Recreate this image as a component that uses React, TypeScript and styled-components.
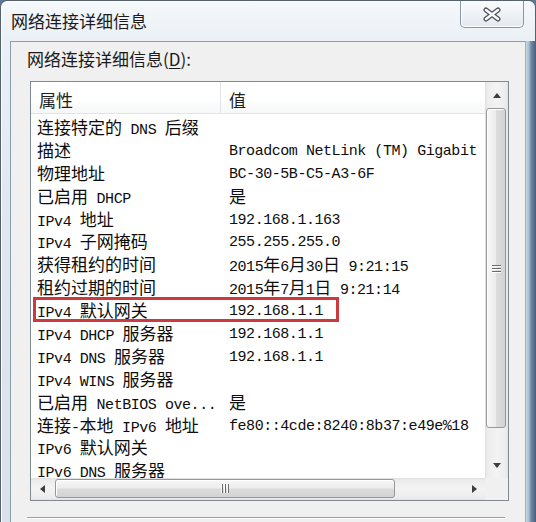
import React from "react";
import styled, { createGlobalStyle } from "styled-components";

const GlobalStyle = createGlobalStyle`
  html, body {
    margin: 0;
    padding: 0;
  }
  body {
    background: #5e7897;
    font-family: "Noto Sans CJK SC", "Noto Sans", sans-serif;
    color: #141414;
  }
`;

const Screen = styled.div`
  width: 536px;
  height: 522px;
  overflow: hidden;
  background: #5e7897;
`;

const Window = styled.div`
  box-sizing: border-box;
  width: 536px;
  height: 560px;
  display: flex;
  flex-direction: column;
  border: 1px solid #56616e;
  border-bottom: 0;
  border-radius: 7px 7px 0 0;
  background: linear-gradient(
    180deg,
    #f5f8fb 0px,
    #eaf0f5 40px,
    #dfe7ef 220px,
    #d8e1ea 560px
  );
  box-shadow: inset 1px 1px 0 #fdfeff;
`;

const TitleBar = styled.div`
  height: 40px;
  flex: none;
  display: flex;
  justify-content: space-between;
  align-items: flex-start;
  padding: 0 11px 0 10px;
`;

const Title = styled.div`
  margin-top: 11px;
  font-size: 17px;
  line-height: 17px;
  color: #1b1b1b;
`;

const CloseButton = styled.div`
  box-sizing: border-box;
  width: 64px;
  height: 27px;
  display: flex;
  align-items: center;
  justify-content: center;
  border: 1px solid #8795a4;
  border-top: 0;
  border-radius: 0 0 5px 5px;
  background: linear-gradient(180deg, #fafcfd 0%, #eef2f6 50%, #e2e9f0 100%);
  box-shadow: inset 0 -1px 0 #ffffff, inset 1px 0 0 #ffffff;
`;

const Body = styled.div`
  flex: 1;
  display: flex;
  padding-left: 9px;
`;

const Client = styled.div`
  flex: 1;
  display: flex;
  flex-direction: column;
  padding: 5px 16px 0 16px;
  background: #f0f0f0;
  border-top: 1px solid #8d9bab;
  border-left: 1px solid #8d9bab;
  border-right: 1px solid #a3b0be;
`;

const RightFrame = styled.div`
  width: 9px;
  flex: none;
  background: linear-gradient(
    90deg,
    #cbd7e3 0px,
    #a9bbcf 3px,
    #6f89a7 5px,
    #56708f 8px,
    #4d6584 9px
  );
`;

const Label = styled.div`
  height: 24px;
  font-size: 17px;
  line-height: 24px;
  margin-bottom: 10px;
  color: #1a1a1a;

  u {
    text-decoration: underline;
    text-underline-offset: 2px;
  }
`;

const ListBox = styled.div`
  box-sizing: border-box;
  margin-left: 3px;
  height: 420px;
  display: grid;
  grid-template-columns: 1fr 23px;
  grid-template-rows: 396px 22px;
  border: 1px solid #828790;
  background: #ffffff;
`;

const ListContent = styled.div`
  grid-column: 1;
  grid-row: 1;
  overflow: hidden;
  display: flex;
  flex-direction: column;
`;

const Header = styled.div`
  box-sizing: border-box;
  height: 32px;
  flex: none;
  display: grid;
  grid-template-columns: 190px 1fr;
  border-bottom: 1px solid #e3e4e6;
  background: linear-gradient(180deg, #ffffff 0%, #ffffff 55%, #f6f7f9 100%);
`;

type HeaderCellProps = {
  $divider?: boolean;
};

const HeaderCell = styled.div<HeaderCellProps>`
  display: flex;
  align-items: center;
  padding: 3px 0 0 8px;
  font-size: 17px;
  color: #1e1e1e;
  border-right: ${(p) => (p.$divider ? "1px solid #e2e3e5" : "0")};
`;

const Rows = styled.div`
  padding-top: 3px;
`;

type RowProps = {
  $marked?: boolean;
};

const Row = styled.div<RowProps>`
  position: relative;
  height: 22.9px;
  display: grid;
  grid-template-columns: 190px 1fr;
  align-items: center;
  font-family: "Liberation Mono", "Noto Sans CJK SC", monospace;
  font-size: 15px;
  line-height: 20px;
  letter-spacing: -0.45px;
  color: #0d0d0d;
  white-space: nowrap;

  &::after {
    content: "";
    display: ${(p) => (p.$marked ? "block" : "none")};
    position: absolute;
    left: 2px;
    top: -3px;
    width: 306px;
    height: 25px;
    box-sizing: border-box;
    border: 3px solid #cc3a3f;
  }
`;

type CellProps = {
  $value?: boolean;
};

const Cell = styled.div<CellProps>`
  padding-left: ${(p) => (p.$value ? "8px" : "6px")};
`;

const Han = styled.span`
  font-family: "Noto Sans CJK SC", sans-serif;
  font-size: 17px;
  line-height: 20px;
  letter-spacing: 0;
`;

const VScroll = styled.div`
  grid-column: 2;
  grid-row: 1;
  display: flex;
  flex-direction: column;
  background: linear-gradient(
    90deg,
    #dedede 0px,
    #ececec 2px,
    #f3f3f3 12px,
    #ececec 21px,
    #e2e2e2 23px
  );
`;

const HScroll = styled.div`
  grid-column: 1;
  grid-row: 2;
  display: flex;
  background: linear-gradient(
    180deg,
    #dedede 0px,
    #ececec 2px,
    #f3f3f3 11px,
    #ececec 20px,
    #e2e2e2 22px
  );
`;

const Corner = styled.div`
  grid-column: 2;
  grid-row: 2;
  background: #f0f0f0;
`;

type ArrowButtonProps = {
  $horizontal?: boolean;
};

const ArrowButton = styled.div<ArrowButtonProps>`
  flex: none;
  width: ${(p) => (p.$horizontal ? "22px" : "auto")};
  height: ${(p) => (p.$horizontal ? "auto" : "26px")};
  display: flex;
  align-items: center;
  justify-content: center;
`;

const Spacer = styled.div`
  flex: 1;
`;

type ThumbProps = {
  $horizontal?: boolean;
};

const Thumb = styled.div<ThumbProps>`
  flex: none;
  box-sizing: border-box;
  display: flex;
  align-items: center;
  justify-content: center;
  border: 1px solid #979797;
  border-radius: 3px;
  margin: ${(p) => (p.$horizontal ? "1px 0 2px 2px" : "0 2px 0 1px")};
  width: ${(p) => (p.$horizontal ? "340px" : "auto")};
  height: ${(p) => (p.$horizontal ? "auto" : "320px")};
  background: ${(p) =>
    p.$horizontal
      ? "linear-gradient(180deg, #f7f7f7 0%, #ececec 48%, #dcdcdc 52%, #d3d3d3 100%)"
      : "linear-gradient(90deg, #f7f7f7 0%, #ececec 48%, #dcdcdc 52%, #d3d3d3 100%)"};
  box-shadow: inset 1px 1px 0 #ffffff;
`;

const Divider = styled.div`
  margin: 16px 4px 0 0;
  border-top: 1px solid #a0a0a0;
  border-bottom: 1px solid #ffffff;
`;

const HAN = /([\u2e80-\u9fff\uf900-\ufaff\uff00-\uffef]+)/;

const Mixed = ({ text }: { text: string }) => (
  <>
    {text
      .split(HAN)
      .map((part, i) => (i % 2 === 1 ? <Han key={i}>{part}</Han> : part))}
  </>
);

const CloseIcon = () => (
  <svg width="20" height="15" viewBox="0 0 20 15">
    <path
      d="M4 3 L16 12 M16 3 L4 12"
      stroke="#4b4f55"
      strokeWidth="5"
      strokeLinecap="round"
    />
    <path
      d="M4 3 L16 12 M16 3 L4 12"
      stroke="#fbfbfb"
      strokeWidth="2.6"
      strokeLinecap="round"
    />
  </svg>
);

type ArrowProps = {
  dir: "up" | "down" | "left" | "right";
};

const Arrow = ({ dir }: ArrowProps) => {
  const shapes = {
    up: "M0 5 L4 0 L8 5 Z",
    down: "M0 0 L8 0 L4 5 Z",
    left: "M5 0 L5 8 L0 4 Z",
    right: "M0 0 L5 4 L0 8 Z",
  };
  const wide = dir === "up" || dir === "down";
  return (
    <svg width={wide ? 8 : 5} height={wide ? 5 : 8} viewBox={wide ? "0 0 8 5" : "0 0 5 8"}>
      <path d={shapes[dir]} fill="#3d3d3d" />
    </svg>
  );
};

const Grip = ({ horizontal }: { horizontal?: boolean }) => (
  <svg width="9" height="9" viewBox="0 0 9 9">
    <g transform={horizontal ? "rotate(90 4.5 4.5)" : undefined}>
      <path d="M0 1.5 H9 M0 4.5 H9 M0 7.5 H9" stroke="#6a6a6a" strokeWidth="1" />
      <path d="M0 2.5 H9 M0 5.5 H9 M0 8.5 H9" stroke="#ffffff" strokeWidth="1" />
    </g>
  </svg>
);

const rows: [string, string][] = [
  ["连接特定的 DNS 后缀", ""],
  ["描述", "Broadcom NetLink (TM) Gigabit"],
  ["物理地址", "BC-30-5B-C5-A3-6F"],
  ["已启用 DHCP", "是"],
  ["IPv4 地址", "192.168.1.163"],
  ["IPv4 子网掩码", "255.255.255.0"],
  ["获得租约的时间", "2015年6月30日 9:21:15"],
  ["租约过期的时间", "2015年7月1日 9:21:14"],
  ["IPv4 默认网关", "192.168.1.1"],
  ["IPv4 DHCP 服务器", "192.168.1.1"],
  ["IPv4 DNS 服务器", "192.168.1.1"],
  ["IPv4 WINS 服务器", ""],
  ["已启用 NetBIOS ove...", "是"],
  ["连接-本地 IPv6 地址", "fe80::4cde:8240:8b37:e49e%18"],
  ["IPv6 默认网关", ""],
  ["IPv6 DNS 服务器", ""],
];

const App: React.FC = () => {
  return (
    <Screen>
      <GlobalStyle />
      <Window>
        <TitleBar>
          <Title>网络连接详细信息</Title>
          <CloseButton>
            <CloseIcon />
          </CloseButton>
        </TitleBar>
        <Body>
          <Client>
            <Label>
              网络连接详细信息(<u>D</u>):
            </Label>
            <ListBox>
              <ListContent>
                <Header>
                  <HeaderCell $divider>属性</HeaderCell>
                  <HeaderCell>值</HeaderCell>
                </Header>
                <Rows>
                  {rows.map(([name, value], i) => (
                    <Row key={name} $marked={i === 8}>
                      <Cell>
                        <Mixed text={name} />
                      </Cell>
                      <Cell $value>
                        <Mixed text={value} />
                      </Cell>
                    </Row>
                  ))}
                </Rows>
              </ListContent>
              <VScroll>
                <ArrowButton>
                  <Arrow dir="up" />
                </ArrowButton>
                <Thumb>
                  <Grip />
                </Thumb>
                <Spacer />
                <ArrowButton>
                  <Arrow dir="down" />
                </ArrowButton>
              </VScroll>
              <HScroll>
                <ArrowButton $horizontal>
                  <Arrow dir="left" />
                </ArrowButton>
                <Thumb $horizontal>
                  <Grip horizontal />
                </Thumb>
                <Spacer />
                <ArrowButton $horizontal>
                  <Arrow dir="right" />
                </ArrowButton>
              </HScroll>
              <Corner />
            </ListBox>
            <Divider />
          </Client>
          <RightFrame />
        </Body>
      </Window>
    </Screen>
  );
};

export default App;
